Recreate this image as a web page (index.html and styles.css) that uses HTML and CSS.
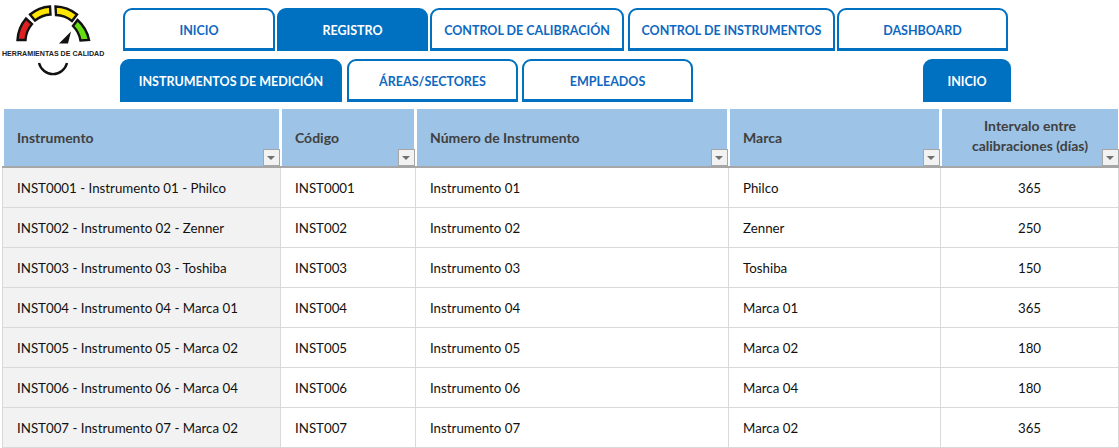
FILE: index.html
```html
<!DOCTYPE html>
<html lang="es">
<head>
  <meta charset="UTF-8">
  <title>Herramientas de Calidad - Instrumentos</title>
  <link rel="stylesheet" href="styles.css">
</head>
<body>
  <div class="top">
    <div class="logo">
      <svg width="110" height="86" viewBox="0 0 110 86">
        <path class="seg" fill="#e02020" d="M17.500 40 A36 36 0 0 1 26 18.500 L32 24 A27 27 0 0 0 25.500 40 Z"/>
        <path class="seg" fill="#ffe600" d="M30 14.500 A36 36 0 0 1 50 6.500 L50.500 14.500 A27 27 0 0 0 35 20.500 Z"/>
        <path class="seg" fill="#ffe600" d="M55.500 6.500 A36 36 0 0 1 77 14.500 L72 21 A27 27 0 0 0 56 15 Z"/>
        <path class="seg" fill="#66dd11" d="M77.500 20 A36 36 0 0 1 89 40 L80.500 40.500 A27 27 0 0 0 73 26 Z"/>
        <path fill="#111" d="M71 31.500 L68 43.500 L59 43.500 Z"/>
        <text class="logo-text" x="2" y="56">HERRAMIENTAS DE CALIDAD</text>
        <path class="smile" d="M39 63 A14.500 15 0 0 0 67 63"/>
      </svg>
    </div>
    <div class="nav">
      <div class="tabs tabs-main">
        <a class="tab w-inicio">INICIO</a>
        <a class="tab active w-registro">REGISTRO</a>
        <a class="tab w-calib">CONTROL DE CALIBRACIÓN</a>
        <a class="tab w-instr">CONTROL DE INSTRUMENTOS</a>
        <a class="tab w-dash">DASHBOARD</a>
      </div>
      <div class="tabs tabs-sub">
        <a class="tab active w-medicion">INSTRUMENTOS DE MEDICIÓN</a>
        <a class="tab w-areas">ÁREAS/SECTORES</a>
        <a class="tab w-emp">EMPLEADOS</a>
        <a class="tab active w-back">INICIO</a>
      </div>
    </div>
  </div>

  <div class="grid">
    <div class="row head">
      <div class="th">Instrumento<span class="filter"></span></div>
      <div class="th">Código<span class="filter"></span></div>
      <div class="th">Número de Instrumento<span class="filter"></span></div>
      <div class="th">Marca<span class="filter"></span></div>
      <div class="th center">Intervalo entre<br>calibraciones (días)<span class="filter"></span></div>
    </div>
    <div class="row">
      <div class="td first">INST0001 - Instrumento 01 - Philco</div>
      <div class="td">INST0001</div>
      <div class="td">Instrumento 01</div>
      <div class="td">Philco</div>
      <div class="td center">365</div>
    </div>
    <div class="row">
      <div class="td first">INST002 - Instrumento 02 - Zenner</div>
      <div class="td">INST002</div>
      <div class="td">Instrumento 02</div>
      <div class="td">Zenner</div>
      <div class="td center">250</div>
    </div>
    <div class="row">
      <div class="td first">INST003 - Instrumento 03 - Toshiba</div>
      <div class="td">INST003</div>
      <div class="td">Instrumento 03</div>
      <div class="td">Toshiba</div>
      <div class="td center">150</div>
    </div>
    <div class="row">
      <div class="td first">INST004 - Instrumento 04 - Marca 01</div>
      <div class="td">INST004</div>
      <div class="td">Instrumento 04</div>
      <div class="td">Marca 01</div>
      <div class="td center">365</div>
    </div>
    <div class="row">
      <div class="td first">INST005 - Instrumento 05 - Marca 02</div>
      <div class="td">INST005</div>
      <div class="td">Instrumento 05</div>
      <div class="td">Marca 02</div>
      <div class="td center">180</div>
    </div>
    <div class="row">
      <div class="td first">INST006 - Instrumento 06 - Marca 04</div>
      <div class="td">INST006</div>
      <div class="td">Instrumento 06</div>
      <div class="td">Marca 04</div>
      <div class="td center">180</div>
    </div>
    <div class="row">
      <div class="td first">INST007 - Instrumento 07 - Marca 02</div>
      <div class="td">INST007</div>
      <div class="td">Instrumento 07</div>
      <div class="td">Marca 02</div>
      <div class="td center">365</div>
    </div>
  </div>
</body>
</html>
```

FILE: styles.css
```css
body {
  margin: 0;
  background-color: #fff;
  font-family: Lato, "Open Sans", sans-serif;
  color: #111;
  height: 448px;
  overflow: hidden;
}
.top {
  display: flex;
  height: 102px;
}
.logo {
  width: 120px;
  flex: none;
}
.logo svg {
  display: block;
}
.seg {
  stroke: #111;
  stroke-width: 2.4;
}
.smile {
  fill: none;
  stroke: #111;
  stroke-width: 2.4;
}
.logo-text {
  font-family: "Liberation Sans", Arial, sans-serif;
  font-size: 7.1px;
  font-weight: bold;
  fill: #222;
}
.nav {
  flex: 1;
  padding-top: 8px;
}
.tabs {
  display: flex;
  height: 43px;
}
.tabs-main {
  margin-left: 3px;
  gap: 2px;
}
.tabs-sub {
  margin-top: 8px;
}
.tab {
  box-sizing: border-box;
  display: flex;
  align-items: center;
  justify-content: center;
  flex: none;
  padding-top: 2px;
  background-color: #fff;
  border: 2px solid #0070c0;
  border-bottom-width: 3px;
  border-radius: 9px 9px 0 0;
  color: #0f68c0;
  font-size: 12.5px;
  font-weight: bold;
}
.tab.active {
  background-color: #0070c0;
  color: #fff;
}
.w-inicio { width: 152px; }
.w-registro { width: 151px; }
.w-calib { width: 194px; }
.w-instr { width: 207px; margin-left: 2px; }
.w-dash { width: 171px; }
.w-medicion { width: 222px; }
.w-areas { width: 171px; margin-left: 5px; }
.w-emp { width: 171px; margin-left: 4px; }
.w-back { width: 88px; margin-left: 230px; }

.grid {
  margin: 7px 0 0 2px;
}
.row {
  display: grid;
  grid-template-columns: 279px 135px 313px 212px 178px;
  height: 40px;
}
.row.head {
  height: 59px;
  border-bottom: 2px solid #a6a6a6;
  box-sizing: border-box;
}
.th {
  position: relative;
  display: flex;
  align-items: center;
  margin: 0 2px 0 1px;
  padding-left: 13px;
  background-color: #9dc3e6;
  color: #404040;
  font-size: 14px;
  font-weight: bold;
}
.th:first-child {
  margin-left: 2px;
}
.th:last-child {
  margin-right: 1px;
}
.th.center {
  justify-content: center;
  text-align: center;
  line-height: 20px;
  padding: 0 0 3px;
}
.filter {
  position: absolute;
  right: -1px;
  bottom: 0;
  box-sizing: border-box;
  width: 17px;
  height: 17px;
  background-color: #f2f2f2;
  border: 1px solid #a6a6a6;
}
.filter::after {
  content: "";
  position: absolute;
  left: 3px;
  top: 6px;
  border-left: 4px solid transparent;
  border-right: 4px solid transparent;
  border-top: 4px solid #707070;
}
.td {
  box-sizing: border-box;
  display: flex;
  align-items: center;
  padding-left: 14px;
  border-right: 1px solid #d9d9d9;
  border-bottom: 1px solid #d9d9d9;
  font-size: 13.3px;
}
.td.first {
  background-color: #f2f2f2;
  border-left: 1px solid #d9d9d9;
}
.td.center {
  justify-content: center;
  padding: 0;
}
```
